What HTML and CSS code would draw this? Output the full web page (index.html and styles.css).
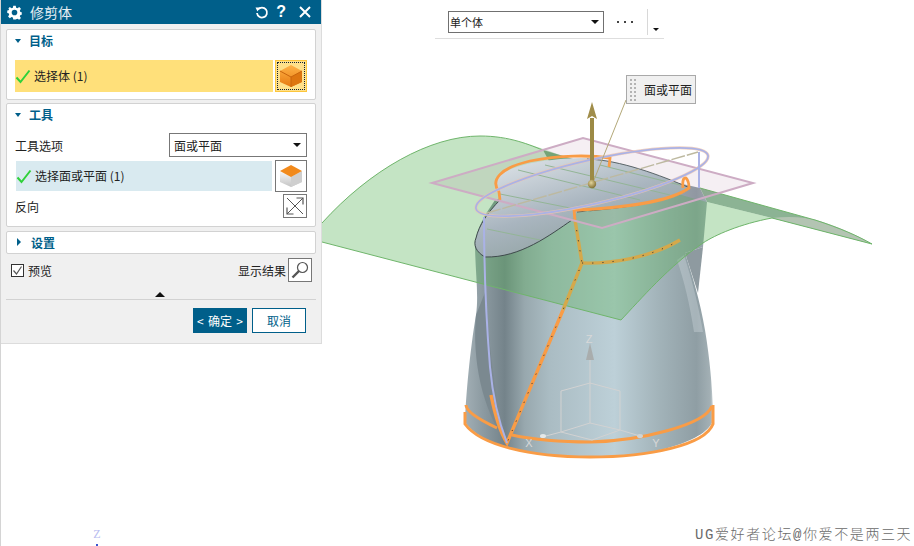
FILE: index.html
```html
<!DOCTYPE html>
<html lang="zh">
<head>
<meta charset="utf-8">
<title>修剪体</title>
<link rel="stylesheet" href="styles.css">
</head>
<body>
<svg class="viewport" width="914" height="546" viewBox="0 0 914 546" xmlns="http://www.w3.org/2000/svg">
  <defs>
    <linearGradient id="bodyG" x1="465" x2="714" y1="0" y2="0" gradientUnits="userSpaceOnUse">
      <stop offset="0" stop-color="#a2afb5"/>
      <stop offset=".07" stop-color="#8d9ba2"/>
      <stop offset=".16" stop-color="#74838a"/>
      <stop offset=".24" stop-color="#98a8ae"/>
      <stop offset=".34" stop-color="#aabcc3"/>
      <stop offset=".6" stop-color="#bdd0d8"/>
      <stop offset=".78" stop-color="#a2b3b9"/>
      <stop offset=".93" stop-color="#8f9ea4"/>
      <stop offset=".985" stop-color="#a3b0b5"/>
      <stop offset="1" stop-color="#d5dcdf"/>
    </linearGradient>
    <linearGradient id="capG" x1="560" x2="590" y1="155" y2="255" gradientUnits="userSpaceOnUse">
      <stop offset="0" stop-color="#d3dae0"/>
      <stop offset=".5" stop-color="#a9b5bf"/>
      <stop offset="1" stop-color="#8fa19f"/>
    </linearGradient>
    <linearGradient id="cubeG" x1="0" x2="0" y1="0" y2="1">
      <stop offset="0" stop-color="#ffb347"/>
      <stop offset="1" stop-color="#e67a10"/>
    </linearGradient>
    <linearGradient id="sideG" x1="0" x2="0" y1="0" y2="1">
      <stop offset="0" stop-color="#f8f8f8"/>
      <stop offset="1" stop-color="#c4c4c4"/>
    </linearGradient>
    <radialGradient id="ballG" cx=".4" cy=".35" r=".7">
      <stop offset="0" stop-color="#e2d49a"/>
      <stop offset="1" stop-color="#7d6a2c"/>
    </radialGradient>
  </defs>

  <!-- body of revolution -->
  <path d="M465,422 C466,395 470,350 476,315 C479,295 475,270 475,243 C478,225 485,215 495,200 L600,165 L700,188 L707,202 L703,247 L685,253 C692,275 700,300 705,330 C710,360 712,385 713,410 L712,423 C700,445 640,458 590,458 C530,458 480,445 465,422 Z" fill="url(#bodyG)"/>
  <path d="M685,253 L703,247 L698,293 Z" fill="#8e9aa0"/>
  <path d="M476,315 C472,360 482,410 507,443 C495,400 488,340 486,290 Z" fill="#7b8990"/>
  <path d="M684,255 C691,277 698,302 703,332 L694,332 C690,305 684,280 677,260 Z" fill="#d3dde1" fill-opacity=".35"/>

  <!-- far dark sheet -->
  <path d="M700,188 L815,220 C840,228 858,236 872,244 L772,218 L707,202 Z" fill="#8cb394"/>
  <path d="M772,218 C790,216 805,217 820,221 C842,228 858,236 872,244 Z" fill="#b3c4b2"/>
  <path d="M700,188 L815,220 C840,228 858,236 872,244 L772,218" fill="none" stroke="#6fb56b" stroke-width="1"/>
  <path d="M543,150 L590,164 L555,172 Z" fill="#7ea884"/>

  <!-- trimming sheet -->
  <path d="M322,223 C370,170 430,136 480,136 C530,136 570,165 707,202 L772,218 C740,224 715,235 703,243 C670,265 640,300 621,320 L322,242 Z" fill="#5cb35c" fill-opacity=".36"/>
  <path d="M322,223 C370,170 430,136 480,136 C510,136 530,145 545,151 M772,218 C740,224 715,235 703,243 C670,265 640,300 621,320 L322,242" fill="none" stroke="#6fb56b" stroke-width="1"/>

  <!-- section plane fill sits behind the cap -->
  <polygon points="432,183 583,138 753,183 602,228" fill="#a0608c" fill-opacity=".1"/>

  <!-- cap -->
  <path d="M495,183 C497,168 540,158 587,158 C620,160 660,175 690,188 C670,203 620,208 577,212 L572,220 C550,235 520,258 485,257 C476,252 473,245 476,238 C479,225 488,212 500,200 Z" fill="url(#capG)"/>
  <path d="M500,200 C488,212 479,225 476,238 C473,245 476,252 485,257 C520,258 550,235 572,220" fill="none" stroke="#3f4a4c" stroke-width="1"/>
  <path d="M577,212 C620,208 670,203 690,188 M587,159 C620,160 660,175 690,188" fill="none" stroke="#3f4a4c" stroke-width=".8"/>
  <g stroke="#93b596" stroke-width="1" fill="none">
    <path d="M518,170 L640,200"/><path d="M545,165 L670,195"/><path d="M500,194 L590,212"/><path d="M487,229 L540,240"/><path d="M600,165 L680,185"/>
  </g>

  <!-- seams -->
  <path d="M575,220 L582,263 L563,310" fill="none" stroke="#d5a94b" stroke-width="3.400"/>
  <path d="M582,263 C610,264 650,258 680,240" fill="none" stroke="#d5a94b" stroke-width="3.400"/>
  <path d="M563,310 L507,443 C500,432 495,415 491,395" fill="none" stroke="#f99c46" stroke-width="3.400"/>
  <path d="M575,220 L582,263 L563,310 L507,443 M582,263 C610,264 650,258 680,240" fill="none" stroke="#333" stroke-width=".9" stroke-dasharray="1.200 9"/>

  <!-- rings -->
  <path d="M466,405 C466,412 480,420 497,428 M512,435 C540,441 565,442 590,442 C640,441 705,425 712,406" fill="none" stroke="#f99c46" stroke-width="3"/>
  <path d="M465,412 L465,424 C480,445 530,457 590,457 C650,457 705,445 713,424 L713,405" fill="none" stroke="#f99c46" stroke-width="3"/>

  <!-- cap outline -->
  <path d="M500,200 L499,192 C490,180 500,168 530,161 C560,155 590,155 610,158 L609,167 M683,188 C682,180 684,177 686,178 C688,180 689,184 689,188 C670,202 620,208 577,210 L574,210 L575,220" fill="none" stroke="#f99c46" stroke-width="2.800"/>

  <!-- section plane outline -->
  <polygon points="432,183 583,138 753,183 602,228" fill="none" stroke="#cdacc4" stroke-width="2"/>
  <ellipse cx="592" cy="182" rx="119" ry="22" transform="rotate(-12.9 592 182)" fill="none" stroke="#ecc4b0" stroke-width="3" stroke-opacity=".8"/>
  <ellipse cx="592" cy="182" rx="119" ry="22" transform="rotate(-12.9 592 182)" fill="none" stroke="#aab2e6" stroke-width="1.700"/>
  <path d="M487,213 L698,152" fill="none" stroke="#bdb9a0" stroke-width="1.400" stroke-dasharray="14 2"/>
  <path d="M484,217 C484,270 487,330 490,367 C493,400 500,425 507,443" fill="none" stroke="#aab2e6" stroke-width="2"/>
  <path d="M699,152 L699,188" fill="none" stroke="#aab2e6" stroke-width="2"/>

  <!-- datum triad -->
  <g fill="none" stroke="#d2d2d2" stroke-width="1">
    <path d="M590,355 L590,423 L561,432 L592,440 L620,430 L590,423"/>
    <path d="M590,383 L561,391 L561,432 M590,383 L620,391 L620,430"/>
    <path d="M561,432 L542,437 M620,430 L640,436"/>
  </g>
  <polygon points="590,343 586,360 594,360" fill="#a9adad"/>
  <ellipse cx="543" cy="436" rx="3" ry="2" fill="#e4e8e8"/>
  <ellipse cx="640" cy="436" rx="3" ry="2" fill="#cfd4d4"/>
  <text x="589" y="343" class="triad-label" text-anchor="middle">Z</text>
  <text x="529" y="447" class="triad-label" text-anchor="middle">X</text>
  <text x="656" y="447" class="triad-label" text-anchor="middle">Y</text>

  <!-- direction handle -->
  <line x1="626" y1="100" x2="594" y2="180" stroke="#b3a878" stroke-width="1"/>
  <rect x="590" y="118" width="4" height="64" fill="#9c8a45"/>
  <polygon points="592,102 587,119 592,116 597,119" fill="#a08d4a"/>
  <circle cx="592" cy="184" r="4.200" fill="url(#ballG)"/>

  <!-- stray view-triad marker -->
  <text x="97" y="538" class="view-z" text-anchor="middle">Z</text>
  <rect x="96" y="544" width="2" height="2" fill="#3a55d0"/>
</svg>

<div class="toolbar">
  <div class="tb-select"><span>单个体</span><i class="caret"></i></div>
  <div class="tb-more"></div>
  <div class="tb-sep"></div>
  <i class="caret tb-caret"></i>
</div>

<div class="callout"><span class="grip"></span><span>面或平面</span></div>

<div class="watermark">UG爱好者论坛@你爱不是两三天</div>

<div class="dialog">
  <header class="titlebar">
    <svg class="gear" width="15" height="15" viewBox="0 0 24 24"><path fill="#fff" fill-rule="evenodd" d="M10 1h4l.6 3.200 2.200.9L19.500 3.300l2.800 2.800-1.800 2.700.9 2.200 2.200.6v3.800l-2.200.6-.9 2.200 1.800 2.700-2.800 2.800-2.700-1.800-2.200.9L14 23h-4l-.6-2.900-2.200-.9-2.700 1.800-2.800-2.800 1.800-2.700-.9-2.200-2.200-.6v-3.800l2.200-.6.9-2.200L1.700 6.100 4.500 3.300l2.700 1.800 2.200-.9zM12 7.500a4.500 4.500 0 1 0 0 9 4.500 4.500 0 0 0 0-9z"/></svg>
    <span class="title">修剪体</span>
    <svg class="tb-icon" width="15" height="15" viewBox="0 0 15 15"><path d="M4 4.500A5 5 0 1 1 3 8" fill="none" stroke="#fff" stroke-width="1.800"/><path d="M1.500 2.500 L6 2.500 L3.500 6.500 Z" fill="#fff"/></svg>
    <span class="help">?</span>
    <svg class="tb-icon" width="14" height="14" viewBox="0 0 14 14"><path d="M2 2L12 12M12 2L2 12" stroke="#fff" stroke-width="2" fill="none"/></svg>
  </header>

  <section class="card card-target">
    <div class="card-head"><i class="tri-down"></i><span>目标</span></div>
    <div class="pick-row">
      <div class="pick pick-active">
        <svg class="check" width="16" height="15" viewBox="0 0 16 15"><path d="M1.500 8.500L5.500 13L14.500 1.500" fill="none" stroke="#2fd13a" stroke-width="2"/></svg>
        <span>选择体 (1)</span>
      </div>
      <button class="icon-btn icon-btn-active">
        <span class="dotted">
          <svg width="24" height="24" viewBox="0 0 24 24"><polygon points="12,1 23,7 23,18 12,23 1,18 1,7" fill="url(#cubeG)"/><polygon points="12,13 23,7 23,18 12,23" fill="#dd7510"/><path d="M1,7 L12,13 L23,7 M12,13 L12,23" fill="none" stroke="#c9650c" stroke-width="1"/></svg>
        </span>
      </button>
    </div>
  </section>

  <section class="card card-tool">
    <div class="card-head"><i class="tri-down"></i><span>工具</span></div>
    <div class="field-row">
      <span>工具选项</span>
      <div class="select"><span>面或平面</span><i class="caret"></i></div>
    </div>
    <div class="pick-row pick-row-tool">
      <div class="pick pick-done">
        <svg class="check" width="16" height="15" viewBox="0 0 16 15"><path d="M1.500 8.500L5.500 13L14.500 1.500" fill="none" stroke="#2fd13a" stroke-width="2"/></svg>
        <span>选择面或平面 (1)</span>
      </div>
      <button class="icon-btn">
        <svg width="24" height="24" viewBox="0 0 24 24"><polygon points="12,12 23,7 23,18 12,23 1,18 1,7" fill="url(#sideG)"/><polygon points="12,13 23,7 23,18 12,23" fill="#cfcfcf"/><polygon points="12,1 23,7 12,13 1,7" fill="#f28a1c"/></svg>
      </button>
    </div>
    <div class="field-row field-reverse">
      <span>反向</span>
      <button class="icon-btn icon-btn-small">
        <svg width="20" height="20" viewBox="0 0 20 20"><path d="M2 2L18 18" stroke="#555" stroke-width="1" fill="none"/><path d="M18 2L2 18" stroke="#555" stroke-width="1" fill="none"/><path d="M11.500 2H18V8.500M2 11.500V18H8.500" stroke="#555" stroke-width="1.200" fill="none"/></svg>
      </button>
    </div>
  </section>

  <section class="card card-settings">
    <div class="card-head"><i class="tri-right"></i><span>设置</span></div>
  </section>

  <div class="preview-row">
    <label class="preview">
      <span class="checkbox"><svg width="11" height="11" viewBox="0 0 11 11"><path d="M1.500 5.500L4.500 9L9.500 1.500" fill="none" stroke="#555" stroke-width="1.200"/></svg></span>
      <span>预览</span>
    </label>
    <div class="result">
      <span>显示结果</span>
      <button class="icon-btn icon-btn-small">
        <svg width="20" height="20" viewBox="0 0 20 20"><circle cx="12.500" cy="7.500" r="5" fill="#fff" stroke="#555" stroke-width="1.200"/><path d="M9 11L2.500 17.500" stroke="#555" stroke-width="2.400" fill="none"/></svg>
      </button>
    </div>
  </div>

  <div class="collapse"><i class="tri-up"></i></div>

  <footer class="actions">
    <button class="btn btn-primary"><span>&lt;</span><span>确定</span><span>&gt;</span></button>
    <button class="btn btn-secondary">取消</button>
  </footer>
</div>
</body>
</html>
```
FILE: styles.css
```css
* { box-sizing: border-box; }
html, body { margin: 0; padding: 0; }
body {
  position: relative;
  width: 914px;
  height: 546px;
  overflow: hidden;
  background: #fff;
  font-family: "Noto Sans CJK SC", "Liberation Sans", sans-serif;
  font-size: 12px;
  color: #222;
  border-left: 1px solid #d4d4d4;
}
button { font: inherit; padding: 0; margin: 0; cursor: default; }
i { display: block; font-style: normal; }

.viewport { position: absolute; left: -1px; top: 0; }
.triad-label { font-family: "Liberation Sans", sans-serif; font-size: 11px; fill: #d8d8d8; }
.view-z { font-family: "Liberation Serif", serif; font-size: 12px; fill: #b9bdf0; }

/* dialog */
.dialog {
  position: absolute;
  left: -1px;
  top: 0;
  width: 322px;
  height: 344px;
  display: flex;
  flex-direction: column;
  background: #f0f0f0;
  border-right: 1px solid #dcdcdc;
  border-bottom: 1px solid #dcdcdc;
}
.titlebar {
  height: 24px;
  flex: none;
  display: flex;
  align-items: center;
  padding: 0 9px 0 7px;
  background: #005f8a;
  color: #fff;
}
.gear { flex: none; }
.title { margin-left: 8px; flex: 1; font-size: 14px; color: #e8f0f4; }
.tb-icon { flex: none; }
.help { margin: 0 12px 0 7px; font: bold 16px "Liberation Sans", sans-serif; color: #fff; }

.card {
  margin: 0 5px 0 6px;
  background: #fff;
  border: 1px solid #d2d2d2;
  border-radius: 2px;
  flex: none;
}
.card-target { margin-top: 5px; height: 71px; }
.card-tool { margin-top: 3px; height: 124px; }
.card-settings { margin-top: 4px; height: 23px; }
.card-head {
  display: flex;
  align-items: center;
  height: 22px;
  padding: 0 0 2px 8px;
  gap: 8px;
  font-size: 12px;
  font-weight: 700;
  color: #005f8a;
}
.tri-down { width: 0; height: 0; border: 3.500px solid transparent; border-top: 4px solid #005f8a; border-bottom: 0; margin-top: 1px; }
.tri-right { width: 0; height: 0; border: 4px solid transparent; border-left: 4px solid #005f8a; border-right: 0; margin-left: 2px; margin-right: 2px; }
.tri-up { width: 0; height: 0; border: 5px solid transparent; border-bottom: 5px solid #111; border-top: 0; }

.pick-row { display: flex; justify-content: space-between; margin: 8px 8px 0; height: 32px; }
.pick { display: flex; align-items: center; gap: 3px; color: #222; }
.pick span { margin-top: -2px; }
.check { flex: none; }
.pick-active { width: 258px; background: #ffe07a; }
.pick-done { width: 256px; height: 30px; margin: 1px 0 0 1px; background: #d9eaf0; }
.icon-btn {
  width: 32px;
  height: 32px;
  display: flex;
  align-items: center;
  justify-content: center;
  background: #fff;
  border: 1px solid #777;
}
.icon-btn-active { background: #ffe08a; border: 1px solid #fcc63c; }
.dotted {
  width: 28px;
  height: 28px;
  display: flex;
  align-items: center;
  justify-content: center;
  border: 1px dotted #123;
}
.icon-btn-small { width: 24px; height: 24px; }

.field-row { display: flex; align-items: center; justify-content: space-between; margin: 7px 8px 0; height: 24px; }
.pick-row-tool { margin-top: 3px; }
.field-reverse { margin-top: 2px; }
.select {
  width: 138px;
  height: 24px;
  display: flex;
  align-items: center;
  justify-content: space-between;
  padding: 0 5px 0 4px;
  background: #fff;
  border: 1px solid #777;
}
.caret { width: 0; height: 0; border: 4px solid transparent; border-top: 4px solid #111; border-bottom: 0; }

.preview-row {
  display: flex;
  align-items: center;
  justify-content: space-between;
  margin: 4px 9px 0 11px;
  height: 24px;
}
.preview { display: flex; align-items: center; gap: 4px; }
.checkbox {
  width: 13px;
  height: 13px;
  display: flex;
  align-items: center;
  justify-content: center;
  background: #fff;
  border: 1px solid #333;
}
.result { display: flex; align-items: center; gap: 2px; }

.collapse {
  margin: 7px 6px 0;
  height: 10px;
  padding-left: 149px;
  padding-top: 3px;
}
.actions {
  margin: 0 5px 0 6px;
  padding: 8px 10px 0 0;
  border-top: 1px solid #d2d2d2;
  display: flex;
  justify-content: flex-end;
  gap: 5px;
}
.btn { height: 25px; font-size: 12px; }
.btn-primary {
  width: 54px;
  display: flex;
  align-items: center;
  justify-content: space-between;
  padding: 0 3px;
  background: #005f8a;
  border: 1px solid #005f8a;
  color: #fff;
}
.btn-secondary { width: 54px; background: #fff; border: 1px solid #005f8a; color: #005f8a; }

/* floating command bar */
.toolbar {
  position: absolute;
  left: 434px;
  top: 0;
  width: 229px;
  height: 39px;
  display: flex;
  align-items: flex-start;
  border-bottom: 1px solid #dedede;
  font-size: 11px;
}
.tb-select {
  margin: 11px 0 0 13px;
  width: 156px;
  height: 22px;
  display: flex;
  align-items: center;
  justify-content: space-between;
  padding: 0 4px 0 1px;
  background: #fff;
  border: 1px solid #707070;
}
.tb-more {
  margin: 21px 0 0 13px;
  width: 16px;
  height: 2px;
  background-image: linear-gradient(90deg, #444 2px, transparent 2px);
  background-size: 7px 2px;
}
.tb-sep { margin: 9px 0 0 14px; width: 1px; height: 26px; background: #d8d8d8; }
.tb-caret { margin: 28px 0 0 5px; border-width: 3px; border-top-width: 3px; }

.callout {
  position: absolute;
  left: 625px;
  top: 75px;
  width: 70px;
  height: 29px;
  display: flex;
  align-items: center;
  gap: 8px;
  padding-left: 2px;
  background: #f0f0f0;
  border: 1px solid #a9a9a9;
}
.grip {
  width: 7px;
  height: 23px;
  background-image: radial-gradient(circle, #b3b3b3 1px, transparent 1.200px);
  background-size: 4px 4px;
}

.watermark {
  position: absolute;
  left: 694px;
  top: 526px;
  font-family: "Liberation Mono", "Noto Sans CJK SC", monospace;
  font-size: 14px;
  letter-spacing: 1.600px;
  line-height: 18px;
  color: #6a6a6a;
  white-space: nowrap;
  font-weight: 300;
}
```
